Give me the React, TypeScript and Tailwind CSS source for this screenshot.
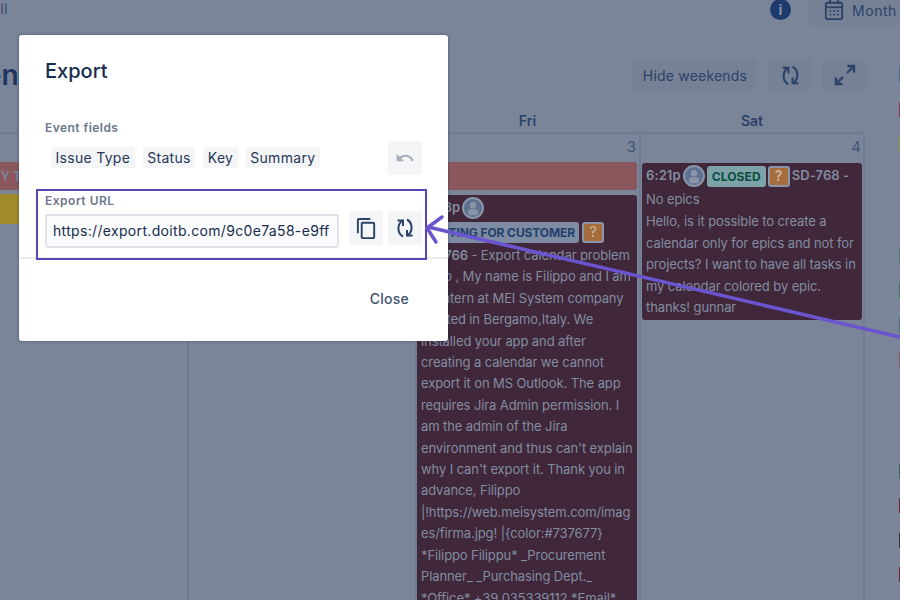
import React from 'react';
import { MdContentCopy, MdUndo } from 'react-icons/md';

const RefreshIcon: React.FC<{ className?: string }> = ({ className }) => (
  <svg viewBox="0 0 24 24" fill="none" stroke="currentColor" strokeWidth={2} className={className}>
    <path d="M10 20.5C4.5 17.5 3.5 9 9.5 4.5" />
    <path d="M4.5 4.5H10V10" />
    <path d="M14 3.5C19.5 6.5 20.5 15 14.5 19.5" />
    <path d="M19.5 19.5H14V14" />
  </svg>
);

const ExpandIcon: React.FC = () => (
  <svg viewBox="0 0 24 24" fill="none" stroke="currentColor" strokeWidth={2.4} className="w-[24px] h-[24px]">
    <path d="M14 10L21 3" />
    <path d="M14.5 3H21V9.5" />
    <path d="M10 14L3 21" />
    <path d="M3 14.5V21H9.5" />
  </svg>
);

const CalendarIcon: React.FC = () => (
  <svg viewBox="0 0 22 24" fill="none" stroke="currentColor" strokeWidth={2} className="w-[20px] h-[22px]">
    <rect x="2" y="4" width="18" height="18" rx="2" />
    <path d="M2 9H20" />
    <path d="M6.5 1V5M15.5 1V5" />
    <path d="M6 13H8M10 13H12M14 13H16M6 17H8M10 17H12M14 17H16" />
  </svg>
);

const Avatar: React.FC = () => (
  <span className="inline-flex items-center justify-center w-[22px] h-[22px] rounded-full bg-[#5f7190] border-2 border-[#8a95a8] overflow-hidden shrink-0 align-middle">
    <svg viewBox="0 0 20 20" className="w-[18px] h-[18px]" fill="#8a95a8">
      <circle cx="10" cy="7" r="3.6" />
      <rect x="4.5" y="11.5" width="11" height="6.5" rx="2.5" />
    </svg>
  </span>
);

const IssueType: React.FC = () => (
  <span className="inline-flex items-center justify-center w-[22px] h-[21px] rounded-[3px] bg-[#a56c3c] border-2 border-[#8a95a8] text-[14px] leading-none text-[#cdb8a4] shrink-0">?</span>
);

const ToolButton: React.FC<{ className?: string; children: React.ReactNode }> = ({ className, children }) => (
  <div className={`flex items-center justify-center h-[32px] rounded-[4px] bg-[#768196] text-[#2b4268] ${className ?? ''}`}>
    {children}
  </div>
);

const sidebarGroups = [
  ['#4f6a99', '#8a3a3f', '#9a8f35'],
  ['#4d7f82', '#3c7a58', '#4f6a85', '#8a5a60'],
  ['#2f6b55', '#6b1f30', '#3f2d3f', '#6b1f30'],
];

const fields = ['Issue Type', 'Status', 'Key', 'Summary'];

const ExportModal: React.FC = () => (
  <div className="absolute left-[19px] top-[35px] w-[429px] h-[306px] bg-white rounded-[3px] shadow-[0_0_3px_rgba(9,30,66,0.5)] text-[#172b4d]">
    <div className="border-b-2 border-[#ebecf0] h-[224px] px-[26px] pt-[22px]">
      <h2 className="text-[20px] leading-[28px] font-medium">Export</h2>
      <div className="mt-[35px] text-[12px] leading-[16px] font-semibold tracking-[0.45px] text-[#6b778c]">Event fields</div>
      <div className="mt-[5px] flex items-center h-[34px]">
        <div className="flex items-start h-[34px] pt-[6px] gap-[8px] pl-[6px]">
          {fields.map((f) => (
            <span key={f} className="h-[21px] px-[4.5px] rounded-[3px] bg-[#f4f5f7] text-[14px] leading-[21px] tracking-[0.3px] text-[#253858]">{f}</span>
          ))}
        </div>
        <button className="ml-auto w-[34px] h-[34px] rounded-[3px] bg-[#f4f5f7] flex items-center justify-center text-[#a5adba]">
          <MdUndo size={20} />
        </button>
      </div>
      <div className="mt-[18px] text-[12px] leading-[16px] font-semibold tracking-[0.5px] text-[#6b778c]">Export URL</div>
      <div className="mt-[2px] flex items-start">
        <div className="mt-[3px] w-[294px] h-[34px] rounded-[3px] border-2 border-[#dfe1e6] bg-[#fafbfc] pl-[6px] text-[14px] leading-[30px] tracking-[0.33px] text-[#172b4d] whitespace-nowrap overflow-hidden">
          https://export.doitb.com/9c0e7a58-e9ff
        </div>
        <button className="ml-[10px] w-[34px] h-[34px] rounded-[3px] bg-[#f4f5f7] flex items-center justify-center text-[#2b4268]">
          <MdContentCopy size={23} />
        </button>
        <button className="ml-[5px] w-[34px] h-[34px] rounded-[3px] bg-[#f4f5f7] flex items-center justify-center text-[#2b4268]">
          <RefreshIcon className="w-[24px] h-[24px]" />
        </button>
      </div>
    </div>
    <div className="flex justify-end pt-[22px] pr-[26px]">
      <button className="h-[34px] px-[13px] text-[14px] font-medium tracking-[0.25px] text-[#42526e]">Close</button>
    </div>
    {/* annotation round the url field */}
    <div className="absolute left-[17px] top-[154px] w-[391px] h-[71px] border-2 border-[#5a45b5]" />
  </div>
);

export default function App() {
  return (
    <div className="relative w-[900px] h-[600px] overflow-hidden bg-[#7a8599] flex font-['Inter',sans-serif] text-[#2b4268]">
      <div className="w-[899px] flex flex-col">
        {/* top bar */}
        <div className="h-[26px] flex items-start shrink-0">
          <span className="ml-[-10px] text-[15px] leading-[18px] text-[#3d4f70]">All</span>
          <div className="ml-auto mr-[-1px] flex items-start">
            <div className="mt-[-1px] w-[21px] h-[21px] rounded-full bg-[#1f3a6c] text-[#8a95a8] flex items-center justify-center text-[14px] font-bold leading-none">i</div>
            <div className="ml-[17px] mt-[-6px] w-[92px] h-[32px] rounded-[4px] bg-[#768196] flex items-center pl-[16px] gap-[8px] whitespace-nowrap text-[14px] tracking-[0.55px]">
              <CalendarIcon />
              <span>Month</span>
            </div>
          </div>
        </div>

        {/* toolbar */}
        <div className="mt-[33px] h-[32px] flex items-center shrink-0">
          <span className="ml-[-15px] text-[28px] font-semibold text-[#1f3560]">en</span>
          <div className="ml-auto mr-[32px] flex">
            <ToolButton className="w-[124px] text-[14px] tracking-[0.2px]">Hide weekends</ToolButton>
            <ToolButton className="ml-[11px] w-[44px]"><RefreshIcon className="w-[25px] h-[25px]" /></ToolButton>
            <ToolButton className="ml-[10px] w-[45px]"><ExpandIcon /></ToolButton>
          </div>
        </div>

        {/* day names */}
        <div className="mt-[20px] h-[21px] grid grid-cols-[187px_228px_224px_226px_34px] text-[14px] font-semibold text-center leading-[20px] shrink-0">
          <div />
          <div />
          <div className="pl-[1px]">Fri</div>
          <div>Sat</div>
        </div>

        {/* calendar */}
        <div className="grid grid-cols-[187px_228px_224px_226px_34px] flex-1 min-h-0 text-[#828da1]">
          <div className="border-t-2 border-[#6f7b91] pt-[28px]">
            <div className="h-[28px] bg-[#8a575d] text-[13px] font-semibold leading-[28px] text-[#7a8599] whitespace-nowrap overflow-hidden">
              <span className="ml-[-8px] inline-block">BY T</span>
            </div>
            <div className="mt-[4px] h-[30px] bg-[#a08a2c]" />
          </div>
          <div className="border-t-2 border-l-2 border-[#6f7b91] pt-[28px]">
            <div className="h-[28px] bg-[#8a575d]" />
          </div>
          <div className="border-t-2 border-l-2 border-[#6f7b91]">
            <div className="text-right pr-[3px] h-[28px] text-[15px] leading-[26px] text-[#3f5273]">3</div>
            <div className="h-[28px] bg-[#8a575d] rounded-r-[3px] mr-[2px] ml-[-2px]" />
            <div className="mt-[5px] mr-[2px] h-[410px] rounded-[3px] bg-[#40273a] px-[4px] py-[2px] text-[13px] leading-[21.4px] tracking-[-0.1px] [overflow-wrap:anywhere]">
              <div className="flex items-center gap-[2px] h-[22px] font-semibold">12:13p <Avatar /></div>
              <div className="flex items-center gap-[3px] h-[22px] mt-[2px]">
                <span className="h-[21px] rounded-[3px] bg-[#7d8ba3] px-[4px] text-[12px] leading-[21px] font-bold text-[#23406c] whitespace-nowrap">WAITING FOR CUSTOMER</span>
                <IssueType />
              </div>
              <div className="mt-[2px]"><span className="font-semibold">SD-766</span> - Export calendar problem Hello , My name is Filippo and I am an intern at MEI System company located in Bergamo,Italy. We installed your app and after creating a calendar we cannot export it on MS Outlook. The app requires Jira Admin permission. I am the admin of the Jira environment and thus can't explain why I can't export it. Thank you in advance, Filippo |!https://web.meisystem.com/images/firma.jpg! |{'{'}color:#737677{'}'} *Filippo Filippu* _Procurement Planner_ _Purchasing Dept._ *Office* +39 035339112 *Email*</div>
            </div>
          </div>
          <div className="border-t-2 border-l-2 border-r-2 border-[#6f7b91] rounded-tr-[3px]">
            <div className="text-right pr-[2px] h-[29px] text-[15px] leading-[26px] text-[#3f5273]">4</div>
            <div className="ml-[1px] mr-[1px] h-[157px] rounded-[3px] bg-[#40273a] px-[4px] py-[2px] text-[13px] leading-[21.4px] tracking-[-0.1px]">
              <div className="flex items-center gap-[2px] h-[22px] whitespace-nowrap font-semibold tracking-[0.1px]">
                6:21p <Avatar />
                <span className="h-[21px] rounded-[3px] bg-[#7da3a8] px-[5px] text-[12px] leading-[21px] font-bold text-[#0b4d3f]">CLOSED</span>
                <IssueType />
                <span>SD-768 -</span>
              </div>
              <div className="mt-[2px]">No epics</div>
              <div className="mt-[1px]">Hello, is it possible to create a calendar only for epics and not for projects? I want to have all tasks in my calendar colored by epic. thanks! gunnar</div>
            </div>
          </div>
          <div />
        </div>
      </div>

      {/* legend at the right edge, nearly out of the frame */}
      <div className="w-[1px] pt-[67px] flex flex-col gap-[97px]">
        {sidebarGroups.map((group, i) => (
          <div key={i} className="flex flex-col gap-[19.5px]">
            {group.map((color, j) => (
              <div key={j} className="h-[15px] w-[1px]" style={{ backgroundColor: color }} />
            ))}
          </div>
        ))}
      </div>

      <ExportModal />

      {/* annotation arrow */}
      <svg viewBox="0 0 900 600" fill="none" stroke="#6a55cf" strokeWidth={3.5} className="absolute inset-0 w-[900px] h-[600px] pointer-events-none">
        <path d="M428 227L900 337" />
        <path d="M442 217L427 228L436 242" strokeLinecap="round" strokeLinejoin="round" />
      </svg>
    </div>
  );
}
